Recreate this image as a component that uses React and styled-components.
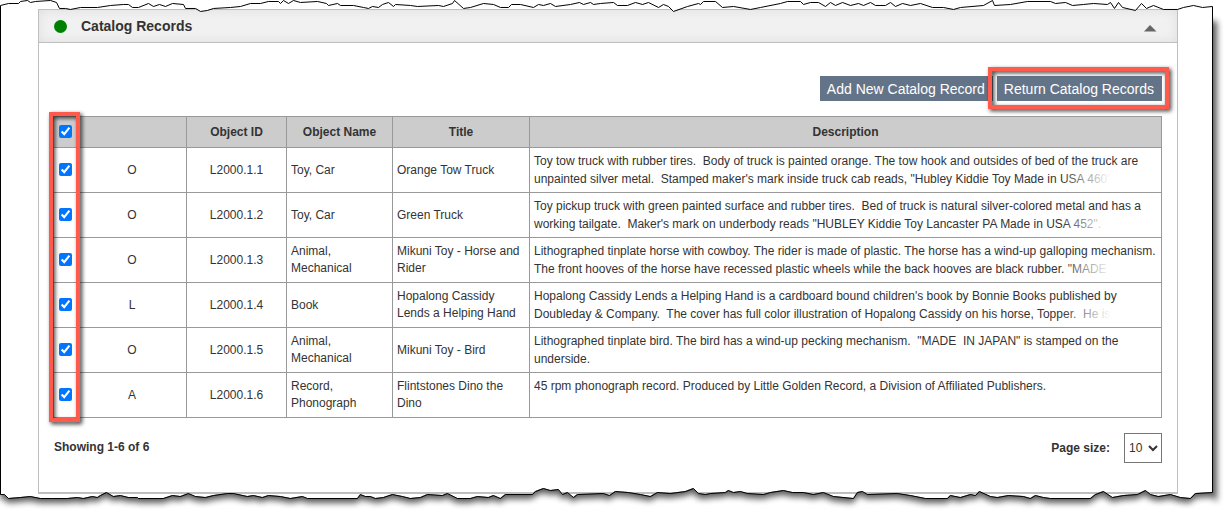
import React, { useState } from "react";
import styled, { createGlobalStyle } from "styled-components";

const GlobalStyle = createGlobalStyle`
  * { box-sizing: border-box; }
  body {
    margin: 0;
    background: #fff;
    color: #333;
    font-family: "Liberation Sans", Arial, sans-serif;
    font-size: 12px;
  }
`;

const Page = styled.div`
  position: relative;
  padding: 9px 51px 20px 38px;
  overflow: hidden;
`;

// Torn paper outline that lies over the page
const Frame = styled.svg`
  position: absolute;
  top: 0;
  left: 0;
  width: 100%;
  height: 100%;
  pointer-events: none;
`;

const Panel = styled.section`
  border: 1px solid #bfbfbf;
  border-bottom-width: 2px;
`;

const PanelHeader = styled.header`
  display: flex;
  align-items: center;
  height: 33px;
  padding: 0 20px 0 15px;
  background: #f1f1f1;
  border-bottom: 1px solid #bfbfbf;
  box-shadow: inset 0 0 12px rgba(0, 0, 0, 0.08);
`;

const StatusDot = styled.span`
  width: 13px;
  height: 13px;
  border-radius: 50%;
  background: #008000;
`;

const Title = styled.h2`
  flex: 1;
  margin: 0 0 0 14px;
  font-size: 14px;
  line-height: 20px;
`;

const Collapse = styled.button`
  display: flex;
  padding: 5px 0 0;
  border: none;
  background: none;
  cursor: pointer;
`;

const PanelBody = styled.div`
  padding: 33px 15px 29px 14px;
`;

const Toolbar = styled.div`
  display: flex;
  justify-content: flex-end;
  gap: 4px;
  margin-bottom: 15px;
`;

const Button = styled.button`
  height: 25px;
  padding: 1px 8px 0 7px;
  border: none;
  background: #647488;
  color: #fff;
  font-family: inherit;
  font-size: 14px;
  line-height: 24px;
  cursor: pointer;
`;

const Marked = styled.div`
  position: relative;
  display: flex;
`;

const Callout = styled.span`
  position: absolute;
  inset: ${(props) => props.$inset};
  width: ${(props) => props.$width || "auto"};
  border: 4px solid #ff5a4b;
  filter: drop-shadow(2px 2px 2px rgba(0, 0, 0, 0.8));
  pointer-events: none;
`;

const TableWrap = styled.div`
  position: relative;
`;

const Table = styled.table`
  width: 100%;
  table-layout: fixed;
  border-collapse: collapse;
  line-height: 17px;
`;

const HeadCell = styled.th`
  height: 31px;
  padding: 0;
  border: 1px solid #999;
  background: #ccc;
`;

const Cell = styled.td`
  height: 45px;
  padding: 0 4px;
  border: 1px solid #999;
  text-align: ${(props) => props.$align || "left"};
`;

const CheckCell = styled(Cell)`
  padding: 0;
`;

const Checkbox = styled.input`
  display: block;
  width: 13px;
  height: 13px;
  margin: 0 auto 2px;
  accent-color: #0075ff;
`;

const Description = styled.div`
  position: relative;
  height: 36px;
  line-height: 18px;
  white-space: pre-wrap;

  &::after {
    content: "";
    position: absolute;
    right: 0;
    bottom: 0;
    width: 96px;
    height: 18px;
    background: linear-gradient(to right, rgba(255, 255, 255, 0), #fff 52%);
  }
`;

const Footer = styled.div`
  display: flex;
  justify-content: space-between;
  margin-top: 15px;
  padding-left: 1px;
  font-weight: bold;
  line-height: 28px;
`;

const PageSize = styled.label`
  display: flex;
  align-items: center;
  gap: 14px;
`;

const Select = styled.select`
  width: 38px;
  height: 30px;
  padding: 0;
  border: 1px solid #767676;
  border-radius: 0;
  background: #fff;
  color: #333;
  font-family: inherit;
  font-size: 12px;
`;

const topEdge =
  "0,5 8,3 18,3 20,1 27,0 30,2 35,1 50,0 56,2 59,8 65,8 70,9 80,7 97,7 110,5 123,4 128,4 132,7 138,7 148,3 153,6 159,4 165,6 172,3 183,4 185,8 195,8 200,11 207,10 213,8 230,7 240,6 250,3 260,3 268,1 278,1 280,3 283,0 288,3 293,0 300,2 317,1 326,3 328,5 337,3 340,5 353,5 363,7 368,8 372,6 378,7 382,4 388,2 393,6 395,4 410,5 417,6 438,5 443,6 452,3 454,0 463,8 470,7 483,3 493,4 500,7 508,7 511,4 520,4 533,7 538,4 543,5 550,3 555,6 570,4 579,2 583,4 590,2 593,4 600,3 613,2 617,5 627,5 635,2 642,4 648,2 658,7 663,4 668,6 673,11 687,6 698,3 700,4 703,1 715,1 722,7 733,6 750,9 760,7 780,3 787,1 800,1 803,4 810,2 818,2 825,6 830,2 835,5 842,2 850,5 858,3 863,5 870,2 875,5 885,5 890,2 895,6 902,3 910,5 920,3 932,7 943,7 953,9 960,7 983,5 992,0 994,5 1010,4 1027,1 1050,1 1055,3 1065,2 1072,5 1083,4 1093,3 1107,4 1110,2 1114,8 1118,2 1122,7 1135,10 1141,3 1146,8 1153,5 1163,9 1177,9 1183,7 1193,5 1202,7 1212,6";

const bottomEdge =
  "0,495 4,495 8,499 20,498 30,497 40,499 52,499 67,499 77,498 83,499 92,497 97,498 100,496 106,493 113,497 120,496 128,498 137,498 138,499 163,499 172,496 180,497 188,494 195,497 205,498 213,496 227,494 233,494 247,497 253,496 262,498 268,496 280,497 290,499 302,497 307,499 357,499 360,495 365,497 370,497 375,499 383,498 392,495 402,497 410,499 420,498 427,495 442,496 447,494 457,499 470,499 477,497 488,498 493,496 500,499 505,495 532,495 535,492 543,489 550,491 558,490 562,495 567,493 573,498 577,495 603,494 609,496 615,492 628,493 640,495 650,497 657,493 670,494 685,492 693,489 698,494 705,495 710,494 725,493 728,491 733,493 740,492 747,494 763,495 770,493 783,491 792,493 803,493 813,495 823,493 833,497 853,499 857,493 862,492 867,495 897,494 910,496 925,499 947,499 950,496 960,498 970,495 975,496 979,492 990,497 997,498 1008,496 1023,497 1030,499 1035,496 1043,498 1050,499 1090,499 1095,495 1103,492 1112,498 1123,496 1137,495 1145,491 1150,495 1158,497 1170,495 1180,498 1190,499 1195,494 1212,493";

const bottomEdgeBack = bottomEdge.split(" ").reverse().join(" ");
const sheet = `M${topEdge} L${bottomEdgeBack} Z`;

const columns = ["", "Object ID", "Object Name", "Title", "Description"];

const records = [
  {
    type: "O",
    id: "L2000.1.1",
    name: "Toy, Car",
    title: "Orange Tow Truck",
    description:
      'Toy tow truck with rubber tires.  Body of truck is painted orange. The tow hook and outsides of bed of the truck are unpainted silver metal.  Stamped maker\'s mark inside truck cab reads, "Hubley Kiddie Toy Made in USA 460"',
  },
  {
    type: "O",
    id: "L2000.1.2",
    name: "Toy, Car",
    title: "Green Truck",
    description:
      'Toy pickup truck with green painted surface and rubber tires.  Bed of truck is natural silver-colored metal and has a working tailgate.  Maker\'s mark on underbody reads "HUBLEY Kiddie Toy Lancaster PA Made in USA 452".',
  },
  {
    type: "O",
    id: "L2000.1.3",
    name: "Animal, Mechanical",
    title: "Mikuni Toy - Horse and Rider",
    description:
      'Lithographed tinplate horse with cowboy. The rider is made of plastic. The horse has a wind-up galloping mechanism. The front hooves of the horse have recessed plastic wheels while the back hooves are black rubber. "MADE',
  },
  {
    type: "L",
    id: "L2000.1.4",
    name: "Book",
    title: "Hopalong Cassidy Lends a Helping Hand",
    description:
      "Hopalong Cassidy Lends a Helping Hand is a cardboard bound children's book by Bonnie Books published by Doubleday & Company.  The cover has full color illustration of Hopalong Cassidy on his horse, Topper.  He is",
  },
  {
    type: "O",
    id: "L2000.1.5",
    name: "Animal, Mechanical",
    title: "Mikuni Toy - Bird",
    description:
      'Lithographed tinplate bird. The bird has a wind-up pecking mechanism.  "MADE  IN JAPAN" is stamped on the underside.',
  },
  {
    type: "A",
    id: "L2000.1.6",
    name: "Record, Phonograph",
    title: "Flintstones Dino the Dino",
    description:
      "45 rpm phonograph record. Produced by Little Golden Record, a Division of Affiliated Publishers.",
  },
];

const TornFrame = () => (
  <Frame viewBox="0 0 1229 515" preserveAspectRatio="none" aria-hidden="true">
    <defs>
      <clipPath id="outside">
        <path clipRule="evenodd" d={`M-5,-5 H1234 V520 H-5 Z ${sheet}`} />
      </clipPath>
      <filter id="soften" x="-5%" y="-5%" width="110%" height="110%">
        <feGaussianBlur stdDeviation="3" />
      </filter>
    </defs>
    <g clipPath="url(#outside)">
      <rect width="1229" height="515" fill="#fff" />
      {/* shadow starts a little below the top edge */}
      <path
        d={`M12,16 H1217 V498 L${bottomEdgeBack} Z`}
        fill="#000"
        opacity="0.65"
        filter="url(#soften)"
        transform="translate(0 5)"
      />
    </g>
    <path
      d={sheet}
      fill="none"
      stroke="#000"
      strokeWidth="1"
      shapeRendering="crispEdges"
      transform="translate(0.5 0.5)"
    />
  </Frame>
);

const App = () => {
  const [selected, setSelected] = useState(records.map((r) => r.id));
  const [open, setOpen] = useState(true);
  const [pageSize, setPageSize] = useState("10");

  const toggle = (id) => {
    setSelected(selected.includes(id) ? selected.filter((s) => s !== id) : [...selected, id]);
  };

  const toggleAll = (e) => {
    setSelected(e.target.checked ? records.map((r) => r.id) : []);
  };

  return (
    <Page>
      <GlobalStyle />
      <Panel>
        <PanelHeader>
          <StatusDot />
          <Title>Catalog Records</Title>
          <Collapse type="button" aria-label="Toggle panel" onClick={() => setOpen(!open)}>
            <svg width="13" height="7" viewBox="0 0 13 7">
              <path d="M6 0 L12.5 6.5 H0 Z" fill="#666" />
            </svg>
          </Collapse>
        </PanelHeader>
        {open && (
          <PanelBody>
            <Toolbar>
              <Button type="button">Add New Catalog Record</Button>
              <Marked>
                <Button type="button">Return Catalog Records</Button>
                <Callout $inset="-9px -7px -8px -9px" />
              </Marked>
            </Toolbar>
            <TableWrap>
              <Table>
                <colgroup>
                  <col style={{ width: 24 }} />
                  <col style={{ width: 109 }} />
                  <col style={{ width: 100 }} />
                  <col style={{ width: 106 }} />
                  <col style={{ width: 137 }} />
                  <col />
                </colgroup>
                <thead>
                  <tr>
                    <HeadCell>
                      <Checkbox
                        type="checkbox"
                        aria-label="Select all records"
                        checked={selected.length === records.length}
                        onChange={toggleAll}
                      />
                    </HeadCell>
                    {columns.map((c) => (
                      <HeadCell key={c}>{c}</HeadCell>
                    ))}
                  </tr>
                </thead>
                <tbody>
                  {records.map((r) => (
                    <tr key={r.id}>
                      <CheckCell>
                        <Checkbox
                          type="checkbox"
                          aria-label={`Select ${r.id}`}
                          checked={selected.includes(r.id)}
                          onChange={() => toggle(r.id)}
                        />
                      </CheckCell>
                      <Cell $align="center">{r.type}</Cell>
                      <Cell $align="center">{r.id}</Cell>
                      <Cell>{r.name}</Cell>
                      <Cell>{r.title}</Cell>
                      <Cell>
                        <Description>{r.description}</Description>
                      </Cell>
                    </tr>
                  ))}
                </tbody>
              </Table>
              <Callout $inset="-4px auto -4px -4px" $width="31px" />
            </TableWrap>
            <Footer>
              <span>Showing 1-6 of 6</span>
              <PageSize>
                Page size:
                <Select value={pageSize} onChange={(e) => setPageSize(e.target.value)}>
                  <option>10</option>
                  <option>25</option>
                  <option>50</option>
                </Select>
              </PageSize>
            </Footer>
          </PanelBody>
        )}
      </Panel>
      <TornFrame />
    </Page>
  );
};

export default App;
